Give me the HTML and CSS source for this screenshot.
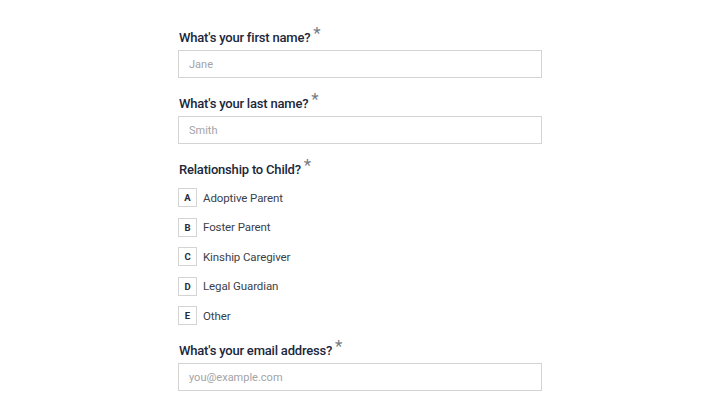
FILE: index.html
```html
<!DOCTYPE html>
<html lang="en">
<head>
<meta charset="utf-8">
<title>Family details</title>
<link rel="stylesheet" href="styles.css">
</head>
<body>
<form class="form">
  <div class="field">
    <label class="label" for="first">What's your first name?<span class="req">*</span></label>
    <input class="input" id="first" type="text" placeholder="Jane">
  </div>
  <div class="field">
    <label class="label" for="last">What's your last name?<span class="req">*</span></label>
    <input class="input" id="last" type="text" placeholder="Smith">
  </div>
  <div class="field">
    <div class="label">Relationship to Child?<span class="req">*</span></div>
    <ul class="choices">
      <li class="choice"><span class="key">A</span><span class="choice-text">Adoptive Parent</span></li>
      <li class="choice"><span class="key">B</span><span class="choice-text">Foster Parent</span></li>
      <li class="choice"><span class="key">C</span><span class="choice-text">Kinship Caregiver</span></li>
      <li class="choice"><span class="key">D</span><span class="choice-text">Legal Guardian</span></li>
      <li class="choice"><span class="key">E</span><span class="choice-text">Other</span></li>
    </ul>
  </div>
  <div class="field">
    <label class="label" for="email">What's your email address?<span class="req">*</span></label>
    <input class="input" id="email" type="email" placeholder="you@example.com">
  </div>
</form>
</body>
</html>
```

FILE: styles.css
```css
html, body {
  margin: 0;
  padding: 0;
  background: #ffffff;
}

body {
  font-family: Roboto, "Noto Sans", sans-serif;
  color: #232a3a;
}

.form {
  width: 364px;
  margin: 0 auto;
  padding-top: 28px;
  display: flex;
  flex-direction: column;
  gap: 16px;
}

.field {
  display: flex;
  flex-direction: column;
}

.label {
  font-size: 13px;
  font-weight: 500;
  letter-spacing: -0.2px;
  line-height: 18px;
  color: #20273a;
  margin-bottom: 3px;
  padding-left: 1px;
}

.req {
  display: inline-block;
  margin-left: 3px;
  font-size: 17px;
  font-weight: 400;
  color: #777a80;
  vertical-align: 3px;
  line-height: 10px;
}

.input {
  box-sizing: border-box;
  width: 364px;
  height: 28px;
  margin: 0;
  padding: 0 10px;
  border: 1px solid #d4d4d4;
  border-radius: 0;
  font-family: inherit;
  font-size: 11px;
  color: #232a3a;
  background: #fff;
  outline: none;
}

.input::placeholder {
  color: #a2a4a8;
}

.choices {
  list-style: none;
  margin: 6px 0 0;
  padding: 0;
  display: flex;
  flex-direction: column;
  gap: 10.5px;
}

.choice {
  display: flex;
  align-items: center;
  gap: 6px;
  height: 19px;
}

.key {
  box-sizing: border-box;
  width: 19px;
  height: 19px;
  border: 1px solid #d4d4d4;
  display: flex;
  align-items: center;
  justify-content: center;
  font-size: 9.5px;
  font-weight: 700;
  color: #232a3a;
}

.choice-text {
  font-size: 11.5px;
  letter-spacing: -0.1px;
  color: #3a3f4b;
}
```
